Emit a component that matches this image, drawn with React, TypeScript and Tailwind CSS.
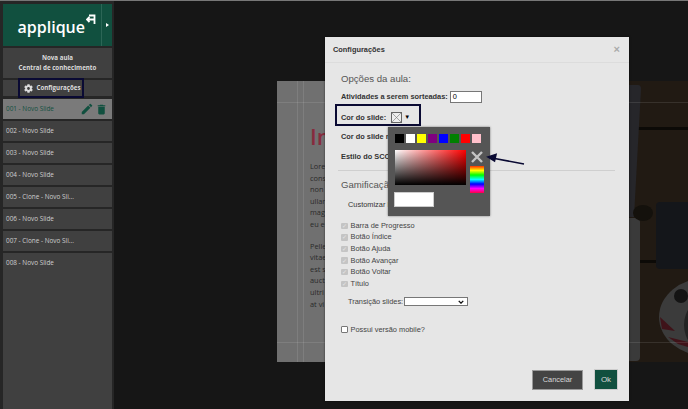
import { FaCog } from "react-icons/fa";
import { MdDelete, MdEdit } from "react-icons/md";

const slides = [
  "001 - Novo Slide",
  "002 - Novo Slide",
  "003 - Novo Slide",
  "004 - Novo Slide",
  "005 - Clone - Novo Sli...",
  "006 - Novo Slide",
  "007 - Clone - Novo Sli...",
  "008 - Novo Slide",
];

const swatches = [
  "bg-[#000000]",
  "bg-[#ffffff]",
  "bg-[#ffff00]",
  "bg-[#800080]",
  "bg-[#0000ff]",
  "bg-[#008000]",
  "bg-[#ff0000]",
  "bg-[#ffc0cb]",
];

const gamification = ["Barra de Progresso", "Botão Índice", "Botão Ajuda", "Botão Avançar", "Botão Voltar", "Título"];

// only what shows beside the modal
const loremA = ["Lore", "cons", "non", "ullar", "mag", "eu e"];
const loremB = ["Pelle", "vitae", "est s", "auct", "ultri", "at vi"];

function Sidebar() {
  return (
    <aside className="flex h-full w-[114px] shrink-0 flex-col bg-[#262626] pl-[3px] pr-[2px] pt-[3px] font-['Open_Sans',sans-serif]">
      {/* Logo */}
      <div className="flex h-[42px] shrink-0 bg-[#11503f]">
        <div className="flex flex-1 items-center justify-end pr-[5px] pt-[3px]">
          <span className="text-[16px] font-semibold leading-none text-white">applique</span>
          <svg viewBox="0 0 10 10" className="mb-[16px] ml-[1px] h-[10px] w-[10px]" fill="none" stroke="#fff" strokeWidth="1.8">
            <path d="M3 1.5H8.5V10M8.5 5.5H1M3.5 3L1 5.5L3.5 8" />
          </svg>
        </div>
        <div className="flex w-[11px] items-center justify-center border-l border-[#2c6656]">
          <span className="h-0 w-0 border-y-[2.5px] border-l-[3px] border-y-transparent border-l-white" />
        </div>
      </div>
      {/* Course title */}
      <div className="mt-[2px] flex h-[30px] shrink-0 flex-col items-center justify-center bg-[#404040] text-[6.2px] font-bold leading-[10px] text-[#dcdcdc]">
        <span>Nova aula</span>
        <span>Central de conhecimento</span>
      </div>
      <div className="mt-[2px] flex h-[16px] shrink-0 items-center justify-center gap-[4px] bg-[#404040] pr-[11px] text-[6.2px] font-bold text-[#dcdcdc]">
        <FaCog className="h-[9px] w-[9px]" />
        <span>Configurações</span>
      </div>
      {/* Slide list */}
      <div className="mt-[3px] flex min-h-0 flex-1 flex-col gap-[2px]">
        {slides.map((s, i) => (
          <div
            key={s}
            className={
              i === 0
                ? "flex h-[20px] shrink-0 items-center justify-between bg-[#7a7a7a] pl-[3px] pr-[4px] text-[6.4px] text-[#11503f]"
                : i === 7
                  ? "flex flex-1 items-start bg-[#404040] pl-[3px] pt-[5px] text-[6.4px] text-[#cfcfcf]"
                  : "flex h-[20px] shrink-0 items-center bg-[#404040] pl-[3px] text-[6.4px] text-[#cfcfcf]"
            }
          >
            <span>{s}</span>
            {i === 0 && (
              <span className="flex items-center gap-[1px] text-[#11503f]">
                <MdEdit className="h-[14px] w-[14px]" />
                <MdDelete className="h-[13px] w-[13px]" />
              </span>
            )}
          </div>
        ))}
      </div>
    </aside>
  );
}

function SlidePreview() {
  return (
    <div className="relative flex h-[281px] overflow-hidden">
      <div className="w-[200px] shrink-0 bg-[#707070] pl-[33px] pt-[41px] font-['Open_Sans',sans-serif] text-[7.4px] leading-[11.6px] text-[#2a2a2a]">
        <div className="text-[22px] font-semibold leading-[28px] text-[#872b3d]">In</div>
        <div className="mt-[11px]">
          {loremA.map((l) => (
            <div key={l} className="whitespace-nowrap">{l}</div>
          ))}
        </div>
        <div className="mt-[10px]">
          {loremB.map((l) => (
            <div key={l} className="whitespace-nowrap">{l}</div>
          ))}
        </div>
      </div>
      <svg viewBox="477 81 211 281" className="h-[281px] flex-1">
        <rect x="477" y="81" width="211" height="281" fill="#211a13" />
        <rect x="630" y="127" width="58" height="3" fill="#0c0a07" />
        <rect x="630" y="260" width="58" height="3" fill="#0c0a07" />
        <path d="M620 85H638Q641 85 641 89L634 217H620Z" fill="#26262a" />
        <path d="M620 218H637Q640 218 640 222V357Q640 361 636 361H620Z" fill="#3a3a3a" />
        <ellipse cx="643" cy="213" rx="10" ry="8" fill="#14110c" />
        <rect x="656" y="202" width="40" height="67" rx="4" fill="#14161a" />
        <ellipse cx="706" cy="317" rx="47" ry="39" fill="#3b3b3b" />
        <ellipse cx="706" cy="325" rx="22" ry="26" fill="#232323" />
        <ellipse cx="681" cy="296" rx="7" ry="7" fill="#141414" />
        <path d="M660 317L675 331L662 329Z" fill="#3f1319" />
        <path d="M668 337L688 342V347L678 344Z" fill="#3f1319" />
      </svg>
      {/* template guide lines */}
      <div className="absolute inset-x-0 top-[21px] h-px bg-white/10" />
      <div className="absolute inset-x-0 top-[261px] h-px bg-white/10" />
      <div className="absolute inset-y-0 left-[20px] w-px bg-white/10" />
      <div className="absolute inset-y-0 left-[26px] w-px bg-white/10" />
    </div>
  );
}

function ColorPopover() {
  return (
    <div className="absolute left-[63px] top-[90px] h-[89px] w-[102px] bg-[#555555] pl-[7px] pt-[7px] shadow-[0_0_2px_rgba(0,0,0,0.5)]">
      <div className="flex gap-[2px]">
        {swatches.map((c) => (
          <span key={c} className={`h-[9px] w-[9px] ${c}`} />
        ))}
      </div>
      <div className="mt-[7px] flex gap-[4px]">
        <div className="relative h-[35px] w-[71px] bg-[linear-gradient(to_right,#ffffff,#ff0000)]">
          <div className="absolute inset-0 bg-[linear-gradient(to_bottom,transparent,#000000)]" />
        </div>
        <div className="flex flex-col items-center">
          <svg viewBox="0 0 14 14" className="h-[14px] w-[14px]" stroke="#c4c4c4" strokeWidth="2.4">
            <path d="M2 2L12 12M12 2L2 12" />
          </svg>
          <div className="mt-[2px] h-[27px] w-[14px] bg-[linear-gradient(to_bottom,#ff3000,#ffff00,#00ff00,#00ffff,#0000ff,#ff00ff,#ff0040)]" />
        </div>
      </div>
      <div className="-ml-[1px] -mt-[1px] h-[15px] w-[40px] border border-[#ccc] bg-white" />
    </div>
  );
}

function SettingsModal() {
  return (
    <div className="absolute left-[325px] top-[36px] flex h-[364px] w-[304px] flex-col bg-[#e6e6e6] font-['Liberation_Sans',sans-serif] text-[7.4px] text-[#333] shadow-[0_0_2px_rgba(0,0,0,0.6)]">
      <div className="flex h-[26px] shrink-0 items-center justify-between border-b border-[#dcdcdc] pl-[8px] pr-[9px]">
        <span className="font-bold">Configurações</span>
        <span className="text-[11px] font-bold leading-none text-[#aaa]">×</span>
      </div>
      <div className="flex flex-1 flex-col pl-[16px]">
        <div className="mt-[9px] text-[9.6px] leading-[14px] text-[#555]">Opções da aula:</div>
        <div className="mt-[5px] flex h-[12px] items-center gap-[2px] font-bold">
          <span>Atividades a serem sorteadas:</span>
          <span className="flex h-[12px] w-[32px] items-center border border-[#777] bg-white pl-[2px] font-normal text-black">0</span>
        </div>
        <div className="mt-[9px] flex h-[11px] items-center font-bold">
          <span>Cor do slide:</span>
          <span className="relative ml-[5px] h-[11px] w-[11px] border border-[#666] bg-[#eee]">
            <svg viewBox="0 0 10 10" className="h-full w-full" stroke="#777" strokeWidth="0.7">
              <path d="M0 0L10 10M10 0L0 10" />
            </svg>
          </span>
          <span className="ml-[2px] text-[6px] text-black">▼</span>
        </div>
        <div className="mt-[9px] h-[10px] font-bold leading-[10px]">Cor do slide no menu:</div>
        <div className="mt-[10px] h-[10px] font-bold leading-[10px]">Estilo do SCORM:</div>
        <div className="-ml-[3px] mt-[8px] h-px w-[277px] bg-[#cfcfcf]" />
        <div className="mt-[7px] text-[9.6px] leading-[14px] text-[#555]">Gamificação:</div>
        <div className="ml-[7px] mt-[8px] h-[10px] leading-[10px]">Customizar Botões</div>
        <div className="mt-[10px] flex flex-col">
          {gamification.map((g) => (
            <div key={g} className="flex h-[11.6px] items-center gap-[2px] leading-[10px] text-[#444]">
              <span className="flex h-[6.5px] w-[6.5px] items-center justify-center rounded-[1px] bg-[#c4c4c4] text-[6px] leading-none text-[#e6e6e6]">✓</span>
              <span className="ml-[1px]">{g}</span>
            </div>
          ))}
        </div>
        <div className="ml-[7px] mt-[7px] flex h-[10px] items-center gap-[1px] text-[#444]">
          <span>Transição slides:</span>
          <span className="flex h-[9px] w-[64px] items-center justify-end border border-[#777] bg-white pr-[3px]">
            <svg viewBox="0 0 8 5" className="h-[4px] w-[6px]" fill="none" stroke="#111" strokeWidth="1.8">
              <path d="M1 1L4 4L7 1" />
            </svg>
          </span>
        </div>
        <div className="mt-[18px] flex h-[10px] items-center gap-[2px] text-[#444]">
          <span className="h-[6.5px] w-[6.5px] rounded-[1px] border border-[#777] bg-white" />
          <span className="ml-[1px]">Possui versão mobile?</span>
        </div>
      </div>
      <div className="flex items-center justify-end gap-[11px] pb-[11px] pr-[11px]">
        <span className="flex h-[20px] w-[51px] items-center justify-center border border-[#999] bg-[#444444] text-[#d8d8d8]">Cancelar</span>
        <span className="flex h-[21px] w-[24px] items-center justify-center border border-[#ccc] bg-[#11503f] text-[8px] text-[#d8d8d8]">Ok</span>
      </div>
      {/* call-out around the colour option */}
      <div className="absolute left-[10px] top-[67px] h-[22px] w-[86px] border-2 border-[#0a0a33]" />
      <ColorPopover />
    </div>
  );
}

export default function App() {
  return (
    <div className="relative flex h-[409px] w-[688px] overflow-hidden border-t border-[#777] bg-[#161616]">
      <Sidebar />
      <main className="min-w-0 flex-1 pl-[163px] pt-[80px]">
        <SlidePreview />
      </main>
      {/* call-out around the settings button */}
      <div className="absolute left-[18px] top-[77px] h-[20px] w-[66px] border-2 border-[#0a0a33]" />
      <SettingsModal />
      {/* annotation arrow */}
      <svg viewBox="0 0 60 20" className="absolute left-[480px] top-[150px] h-[20px] w-[60px]" fill="#0a0a33" stroke="#0a0a33" strokeWidth="1.6">
        <path d="M44 13L12 7" />
        <path d="M8 6L16 3.5L14.5 10Z" />
      </svg>
    </div>
  );
}
